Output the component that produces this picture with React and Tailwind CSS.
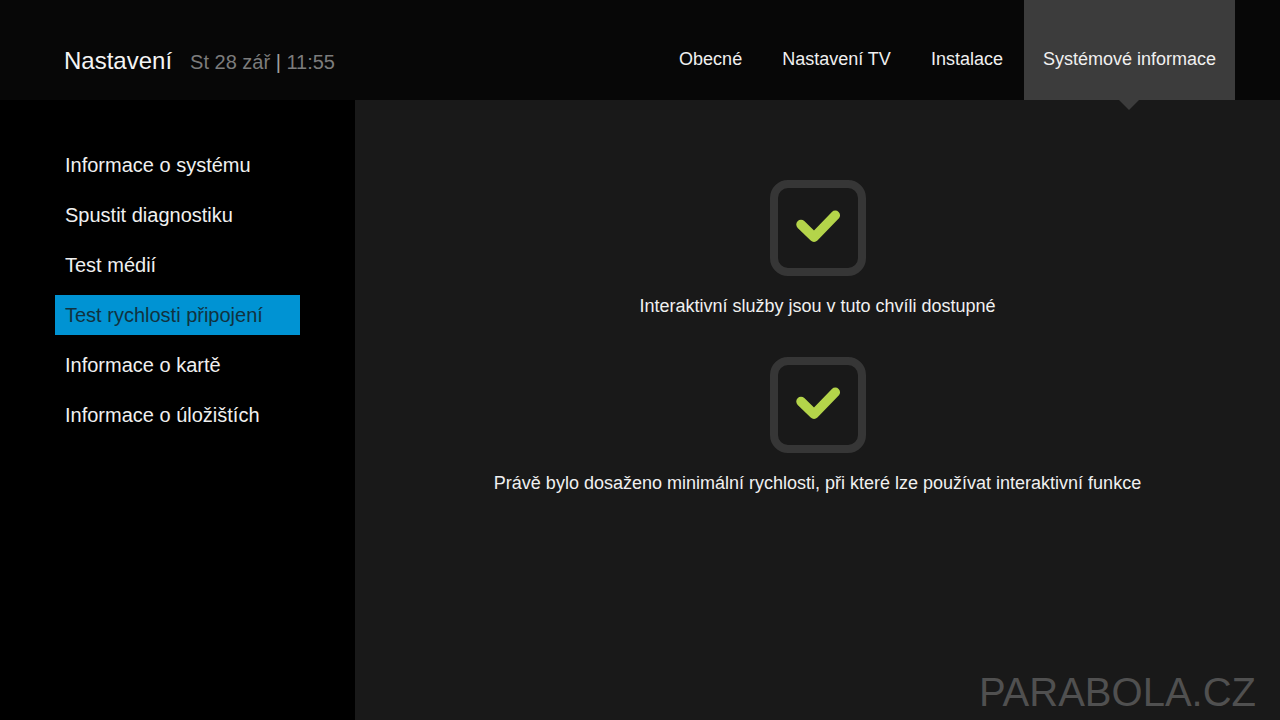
import React from 'react';

const TABS = ['Obecné', 'Nastavení TV', 'Instalace', 'Systémové informace'];

const MENU = [
  'Informace o systému',
  'Spustit diagnostiku',
  'Test médií',
  'Test rychlosti připojení',
  'Informace o kartě',
  'Informace o úložištích',
];

const RESULTS = [
  'Interaktivní služby jsou v tuto chvíli dostupné',
  'Právě bylo dosaženo minimální rychlosti, při které lze používat interaktivní funkce',
];

function Tab({ label, active }) {
  return (
    <button
      type="button"
      aria-current={active ? 'page' : undefined}
      className={`relative px-[19px] pt-[18px] text-[18px] leading-6 whitespace-nowrap text-[#f0f0f0] ${active ? 'bg-[#3c3c3c]' : ''}`}
    >
      {label}
      {active && (
        <svg className="absolute top-full left-1/2 -translate-x-1/2" width="20" height="10" viewBox="0 0 20 10" fill="#3c3c3c">
          <path d="M0 0h20L10 10z" />
        </svg>
      )}
    </button>
  );
}

function MenuItem({ label, active }) {
  return (
    <li>
      <button
        type="button"
        aria-current={active ? 'true' : undefined}
        className={`block w-full h-10 px-2.5 text-left text-[20px] leading-10 whitespace-nowrap ${active ? 'bg-[#0093d3] text-[#11323f]' : 'text-[#f0f0f0]'}`}
      >
        {label}
      </button>
    </li>
  );
}

function Result({ text }) {
  return (
    <div className="w-full flex flex-col items-center gap-[18px]">
      <div className="w-24 h-24 rounded-[18px] border-8 border-[#363636]">
        <svg className="w-20 h-20" viewBox="8 8 80 80" fill="none" stroke="#b4d44a" strokeWidth="9.5" strokeLinecap="round" strokeLinejoin="round">
          <path d="M31 44.5L44 57.2L65.3 35.3" />
        </svg>
      </div>
      <p className="text-center text-[18px] leading-6 text-[#f0f0f0]">{text}</p>
    </div>
  );
}

export default function App() {
  return (
    <div className="relative min-h-screen flex flex-col bg-black font-['Liberation_Sans',Arial,sans-serif]">
      {/* Header */}
      <header className="flex justify-between h-25 pl-16 pr-[45px] bg-[#070707]">
        <div className="flex items-baseline gap-[18px] pt-[45px] whitespace-nowrap">
          <h1 className="text-[24px] leading-8 text-[#f4f4f4]">Nastavení</h1>
          <span className="text-[20px] leading-8 text-[#7c7c7c]">
            St 28 zář <span className="text-[#a0a0a0]">|</span> 11:55
          </span>
        </div>
        <nav className="flex items-stretch gap-0.5">
          {TABS.map((label) => (
            <Tab key={label} label={label} active={label === 'Systémové informace'} />
          ))}
        </nav>
      </header>

      <div className="flex flex-1">
        {/* Sidebar */}
        <aside className="w-[355px] shrink-0 pt-[45px] pl-[55px] pr-[55px]">
          <ul className="flex flex-col gap-2.5">
            {MENU.map((label) => (
              <MenuItem key={label} label={label} active={label === 'Test rychlosti připojení'} />
            ))}
          </ul>
        </aside>

        {/* Test results */}
        <main className="flex-1 flex flex-col items-center gap-[39px] pt-20 bg-[#191919]">
          {RESULTS.map((text) => (
            <Result key={text} text={text} />
          ))}
        </main>
      </div>

      {/* Watermark */}
      <div className="absolute right-6 bottom-1 text-[40px] leading-[48px] text-[#505050] font-['Liberation_Sans_Narrow','Arial_Narrow','Liberation_Sans',sans-serif]">
        PARABOLA.CZ
      </div>
    </div>
  );
}
